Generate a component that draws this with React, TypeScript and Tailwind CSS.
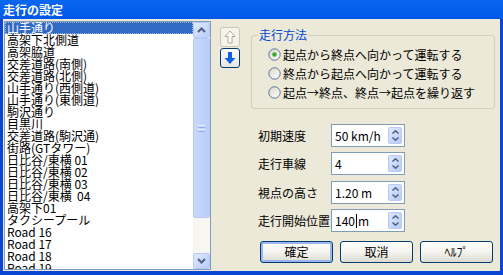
import React from "react";

const items = [
  "山手通り",
  "高架下北側道",
  "高架脇道",
  "交差道路(南側)",
  "交差道路(北側)",
  "山手通り(西側道)",
  "山手通り(東側道)",
  "駒沢通り",
  "目黒川",
  "交差道路(駒沢通)",
  "街路(GTタワー)",
  "日比谷/東横 01",
  "日比谷/東横 02",
  "日比谷/東横 03",
  "日比谷/東横  04",
  "高架下01",
  "タクシープール",
  "Road 16",
  "Road 17",
  "Road 18",
  "Road 19",
];

function Chevron({ up }: { up?: boolean }) {
  return (
    <svg width="9" height="6" viewBox="0 0 9 6">
      <path
        d={up ? "M1 5 L4.5 1.5 L8 5" : "M1 1 L4.5 4.5 L8 1"}
        fill="none"
        stroke="#4d6185"
        strokeWidth="2"
      />
    </svg>
  );
}

function ScrollBtn({ up }: { up?: boolean }) {
  return (
    <div className="h-[16px] shrink-0 rounded-[2px] border border-[#b6c9f4] bg-gradient-to-br from-[#e0e9fe] to-[#b9cdf8] flex items-center justify-center">
      <Chevron up={up} />
    </div>
  );
}

function Radio({ checked, label }: { checked?: boolean; label: string }) {
  return (
    <div className="h-[19px] flex items-center gap-[2px]">
      <svg width="13" height="13" viewBox="0 0 13 13">
        <defs>
          <linearGradient id="rg" x1="0" y1="0" x2="1" y2="1">
            <stop offset="0" stopColor="#d8d6ca" />
            <stop offset="1" stopColor="#ffffff" />
          </linearGradient>
        </defs>
        <circle cx="6.5" cy="6.5" r="5.7" fill="url(#rg)" stroke="#5a7595" strokeWidth="1" />
        {checked && <circle cx="6.5" cy="6.5" r="2.2" fill="#2fae2f" />}
      </svg>
      <span className="leading-[12px] whitespace-nowrap">{label}</span>
    </div>
  );
}

function Spin() {
  return (
    <div className="w-[14px] my-[2px] mr-[2px] flex flex-col rounded-[2px] border border-[#b6c9f4] bg-gradient-to-br from-[#dfe8fd] to-[#b7cbf6]">
      <div className="flex-1 flex items-center justify-center">
        <svg width="7" height="4" viewBox="0 0 7 4">
          <path d="M0.5 3.5 L3.5 0.8 L6.5 3.5" fill="none" stroke="#4d6185" strokeWidth="1.5" />
        </svg>
      </div>
      <div className="flex-1 flex items-center justify-center">
        <svg width="7" height="4" viewBox="0 0 7 4">
          <path d="M0.5 0.5 L3.5 3.2 L6.5 0.5" fill="none" stroke="#4d6185" strokeWidth="1.5" />
        </svg>
      </div>
    </div>
  );
}

function Field({ label, children, mt }: { label: string; children: React.ReactNode; mt: string }) {
  return (
    <div className={`flex items-center ${mt}`}>
      <div className="w-[80px] pl-[7px] leading-[12px] whitespace-nowrap">{label}</div>
      <div className="w-[74px] h-[23px] border border-[#7f9db9] bg-white flex items-stretch">
        <div className="flex-1 flex items-center pl-[3px] leading-[12px] whitespace-nowrap">{children}</div>
        <Spin />
      </div>
    </div>
  );
}

function Btn({ children, def }: { children: React.ReactNode; def?: boolean }) {
  return (
    <div
      className={`w-[73px] h-[22px] rounded-[3px] border border-[#003c74] bg-gradient-to-b from-[#ffffff] via-[#f5f4ef] to-[#dcdad0] flex items-center justify-center leading-[12px] ${
        def ? "shadow-[inset_0_0_0_2px_#9db4ee]" : ""
      }`}
    >
      {children}
    </div>
  );
}

export default function App() {
  return (
    <div className="w-[503px] h-[275px] bg-[#0a46d6] flex flex-col overflow-hidden text-[12px] text-black font-['Noto_Sans_CJK_JP','Noto_Sans',sans-serif]">
      <div className="h-[19px] shrink-0 bg-gradient-to-b from-[#0b66f0] to-[#0058e8] text-white font-bold flex items-center pl-[3px] text-[12px] leading-none">
        走行の設定
      </div>
      <div className="flex-1 min-h-0 mx-[3px] mb-[4px] bg-[#ece9d8] flex">
        {/* List */}
        <div className="ml-[1px] mt-[2px] w-[207px] h-[249px] shrink-0 border border-[#7f9db9] bg-white flex overflow-hidden">
          <div className="flex-1 min-w-0 overflow-hidden">
            {items.map((t, i) => (
              <div
                key={i}
                className={`h-[12px] leading-[12px] pl-[2px] whitespace-pre ${
                  i === 0 ? "bg-[#316ac5] text-white outline-1 outline-dotted outline-offset-[-1px] outline-[#ffffff80]" : ""
                }`}
              >
                {t}
              </div>
            ))}
          </div>
          <div className="w-[17px] shrink-0 flex flex-col bg-[#f7f6f1]">
            <ScrollBtn up />
            <div className="h-[180px] shrink-0 rounded-[2px] border border-[#b6c9f4] bg-gradient-to-r from-[#c9d9fd] to-[#b9cdf8] flex flex-col items-center justify-center gap-[1px]">
              <div className="w-[7px] h-[1px] bg-[#eef4fe]" />
              <div className="w-[7px] h-[1px] bg-[#8cb0f8]" />
              <div className="w-[7px] h-[1px] bg-[#eef4fe]" />
              <div className="w-[7px] h-[1px] bg-[#8cb0f8]" />
            </div>
            <div className="flex-1" />
            <ScrollBtn />
          </div>
        </div>

        {/* Move buttons */}
        <div className="ml-[9px] pt-[8px] flex flex-col gap-[1px] shrink-0">
          <div className="w-[20px] h-[20px] rounded-[3px] border border-[#c9c7ba] bg-[#f5f4ea] flex items-center justify-center">
            <svg width="12" height="14" viewBox="0 0 12 14">
              <path d="M6 1 L11 6.5 L8 6.5 L8 13 L4 13 L4 6.5 L1 6.5 Z" fill="#ffffff" stroke="#aca899" strokeWidth="1" />
            </svg>
          </div>
          <div className="w-[20px] h-[20px] rounded-[3px] border border-[#003c74] bg-gradient-to-b from-white to-[#e5e4dc] flex items-center justify-center">
            <svg width="12" height="14" viewBox="0 0 12 14">
              <path d="M4 1 L8 1 L8 7 L11.5 7 L6 13 L0.5 7 L4 7 Z" fill="#1060e6" />
            </svg>
          </div>
        </div>

        {/* Right panel */}
        <div className="ml-[11px] w-[244px] flex flex-col shrink-0">
          <div className="relative mt-[16px] h-[74px] border border-[#d0d0bf] rounded-[3px] pt-[9px] pl-[16px]">
            <div className="absolute top-[-7px] left-[6px] px-[1px] bg-[#ece9d8] text-[#0046d5] leading-[12px]">走行方法</div>
            <Radio checked label="起点から終点へ向かって運転する" />
            <Radio label="終点から起点へ向かって運転する" />
            <Radio label="起点→終点、終点→起点を繰り返す" />
          </div>

          <Field label="初期速度" mt="mt-[15px]">50 km/h</Field>
          <Field label="走行車線" mt="mt-[5px]">4</Field>
          <Field label="視点の高さ" mt="mt-[6px]">1.20 m</Field>
          <Field label="走行開始位置" mt="mt-[5px]">
            140<span className="inline-block w-[1px] h-[14px] bg-black mx-[1px]" />m
          </Field>

          <div className="mt-[9px] pl-[9px] flex gap-[7px]">
            <Btn def>確定</Btn>
            <Btn>取消</Btn>
            <Btn>ﾍﾙﾌﾟ</Btn>
          </div>
        </div>
      </div>
    </div>
  );
}
